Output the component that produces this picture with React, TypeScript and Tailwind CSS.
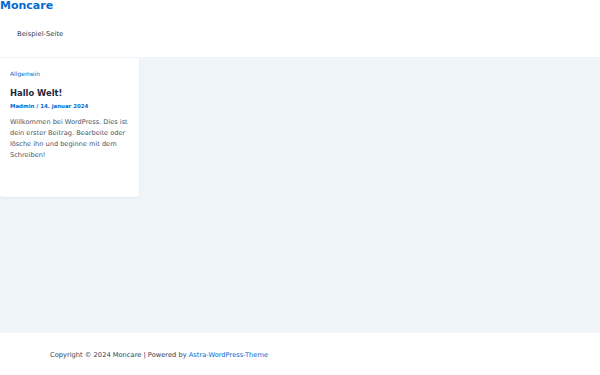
export default function App() {
  return (
    <div className="flex h-[375px] w-[600px] flex-col bg-white font-['DejaVu_Sans',sans-serif] text-[#334155]">
      <header className="h-[57px] bg-white">
        <div className="text-[11px] font-bold leading-[12px] text-[#046bd2]">Moncare</div>
        <nav className="pl-[17px] pt-[17px] text-[6.8px] leading-[10px] text-[#334155]">Beispiel-Seite</nav>
      </header>
      <main className="flex-1 bg-[#f0f5fa] pt-px">
        <article className="h-[139px] w-[139px] rounded-r-[3px] rounded-bl-[3px] bg-white pl-[10px] pr-[6px] pt-[12px] shadow-[0_1px_3px_rgba(0,0,0,0.06)]">
          <a className="block text-[6px] leading-[8px] text-[#046bd2]">Allgemein</a>
          <h2 className="mt-[9px] text-[8.4px] font-bold leading-[12px] text-[#1e293b]">Hallo Welt!</h2>
          <div className="mt-[3px] text-[5.45px] font-bold leading-[8px] text-[#046bd2]">Madmin / 14. januar 2024</div>
          <p className="mt-[7px] text-[6.6px] leading-[11px] text-[#475569]">
            Willkommen bei WordPress. Dies ist dein erster Beitrag. Bearbeite oder lösche ihn und beginne mit dem Schreiben!
          </p>
        </article>
      </main>
      <footer className="flex h-[42px] items-center bg-white pl-[50px] pt-[2px] text-[6.7px] text-[#334155]">
        <span>
          Copyright © 2024 Moncare | Powered by <a className="text-[#046bd2]">Astra-WordPress-Theme</a>
        </span>
      </footer>
    </div>
  );
}
